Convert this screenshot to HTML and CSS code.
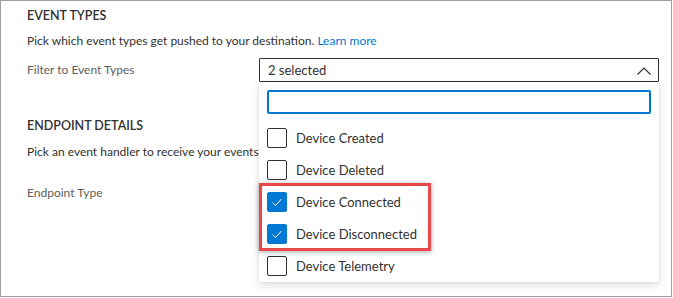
FILE: index.html
```html
<!DOCTYPE html>
<html lang="en">
<head>
    <meta charset="UTF-8">
    <meta name="viewport" content="width=device-width, initial-scale=1.0">
    <title>Event Subscription</title>
    <link rel="stylesheet" href="styles.css">
</head>
<body>
    <div class="frame">
        <h2 class="section-title">EVENT TYPES</h2>
        <p class="section-text">Pick which event types get pushed to your destination. <a href="#" class="link">Learn more</a></p>
        <div class="field-row">
            <label class="field-label">Filter to Event Types</label>
            <div class="combo">
                <div class="combo-box">
                    <span>2 selected</span>
                    <svg class="chevron" width="14" height="8" viewBox="0 0 14 8">
                        <polyline points="0.5,7.5 7,1 13.5,7.5" fill="none" stroke="#323130" stroke-width="1.2"/>
                    </svg>
                </div>
                <div class="dropdown">
                    <div class="search-box"></div>
                    <div class="option">
                        <span class="checkbox"></span>
                        <span>Device Created</span>
                    </div>
                    <div class="option">
                        <span class="checkbox"></span>
                        <span>Device Deleted</span>
                    </div>
                    <div class="option">
                        <span class="checkbox checked">
                            <svg width="20" height="20" viewBox="0 0 20 20">
                                <polyline points="5.5,10.5 8.5,13.5 14.5,7" fill="none" stroke="#ffffff" stroke-width="1"/>
                            </svg>
                        </span>
                        <span>Device Connected</span>
                    </div>
                    <div class="option">
                        <span class="checkbox checked">
                            <svg width="20" height="20" viewBox="0 0 20 20">
                                <polyline points="5.5,10.5 8.5,13.5 14.5,7" fill="none" stroke="#ffffff" stroke-width="1"/>
                            </svg>
                        </span>
                        <span>Device Disconnected</span>
                    </div>
                    <div class="option">
                        <span class="checkbox"></span>
                        <span>Device Telemetry</span>
                    </div>
                    <div class="highlight"></div>
                </div>
            </div>
        </div>

        <h2 class="section-title endpoint">ENDPOINT DETAILS</h2>
        <p class="section-text">Pick an event handler to receive your events</p>
        <div class="field-row endpoint-row">
            <label class="field-label">Endpoint Type</label>
        </div>
    </div>
</body>
</html>
```

FILE: styles.css
```css
body {
    margin: 0;
    padding: 0;
    background-color: white;
    font-family: 'Segoe UI', Lato, sans-serif;
    font-size: 12px;
    color: #323130;
}

.frame {
    width: 672px;
    height: 297px;
    box-sizing: border-box;
    border: 1px solid #a19f9d;
    padding: 5px 0 0 26px;
    overflow: hidden;
    white-space: nowrap;
}

.section-title {
    margin: 0;
    font-size: 12.5px;
    font-weight: 600;
    line-height: 20px;
}

.section-title.endpoint {
    margin-top: 34px;
}

.section-text {
    margin: 5px 0 0 0;
    line-height: 20px;
}

.section-title.endpoint + .section-text {
    margin-top: 6px;
}

.link {
    color: #0078d4;
    text-decoration: none;
}

.field-row {
    display: flex;
    margin-top: 7px;
}

.endpoint-row {
    margin-top: 19px;
}

.field-label {
    width: 232px;
    line-height: 24px;
    color: #605e5c;
}

.combo {
    position: relative;
    width: 400px;
    font-size: 13px;
}

.combo-box {
    height: 24px;
    box-sizing: border-box;
    border: 1px solid #323130;
    border-radius: 1px;
    padding: 0 7px 0 8px;
    display: flex;
    align-items: center;
    justify-content: space-between;
    line-height: 20px;
}

.chevron {
    margin-top: 1px;
}

.dropdown {
    position: absolute;
    top: 24px;
    left: 0;
    width: 400px;
    height: 200px;
    box-sizing: border-box;
    background-color: white;
    box-shadow: 0 3px 8px rgba(0, 0, 0, 0.14), 0 0 2px rgba(0, 0, 0, 0.07);
    padding: 8px 8px 0 8px;
    z-index: 2;
}

.search-box {
    height: 24px;
    box-sizing: border-box;
    border: 2px solid #0078d4;
    border-radius: 2px;
    margin-bottom: 8px;
}

.option {
    height: 32px;
    display: flex;
    align-items: center;
    gap: 9px;
    line-height: 20px;
}

.checkbox {
    width: 20px;
    height: 20px;
    box-sizing: border-box;
    border: 1px solid #323130;
    border-radius: 2px;
    flex-shrink: 0;
}

.checkbox.checked {
    background-color: #0078d4;
    border-color: #0078d4;
}

.checkbox svg {
    display: block;
    margin: -1px;
}

.highlight {
    position: absolute;
    left: 0;
    top: 101px;
    width: 172px;
    height: 68px;
    box-sizing: border-box;
    border: 3px solid #e8474c;
    box-shadow: 0 1px 5px rgba(0, 0, 0, 0.35);
}
```
